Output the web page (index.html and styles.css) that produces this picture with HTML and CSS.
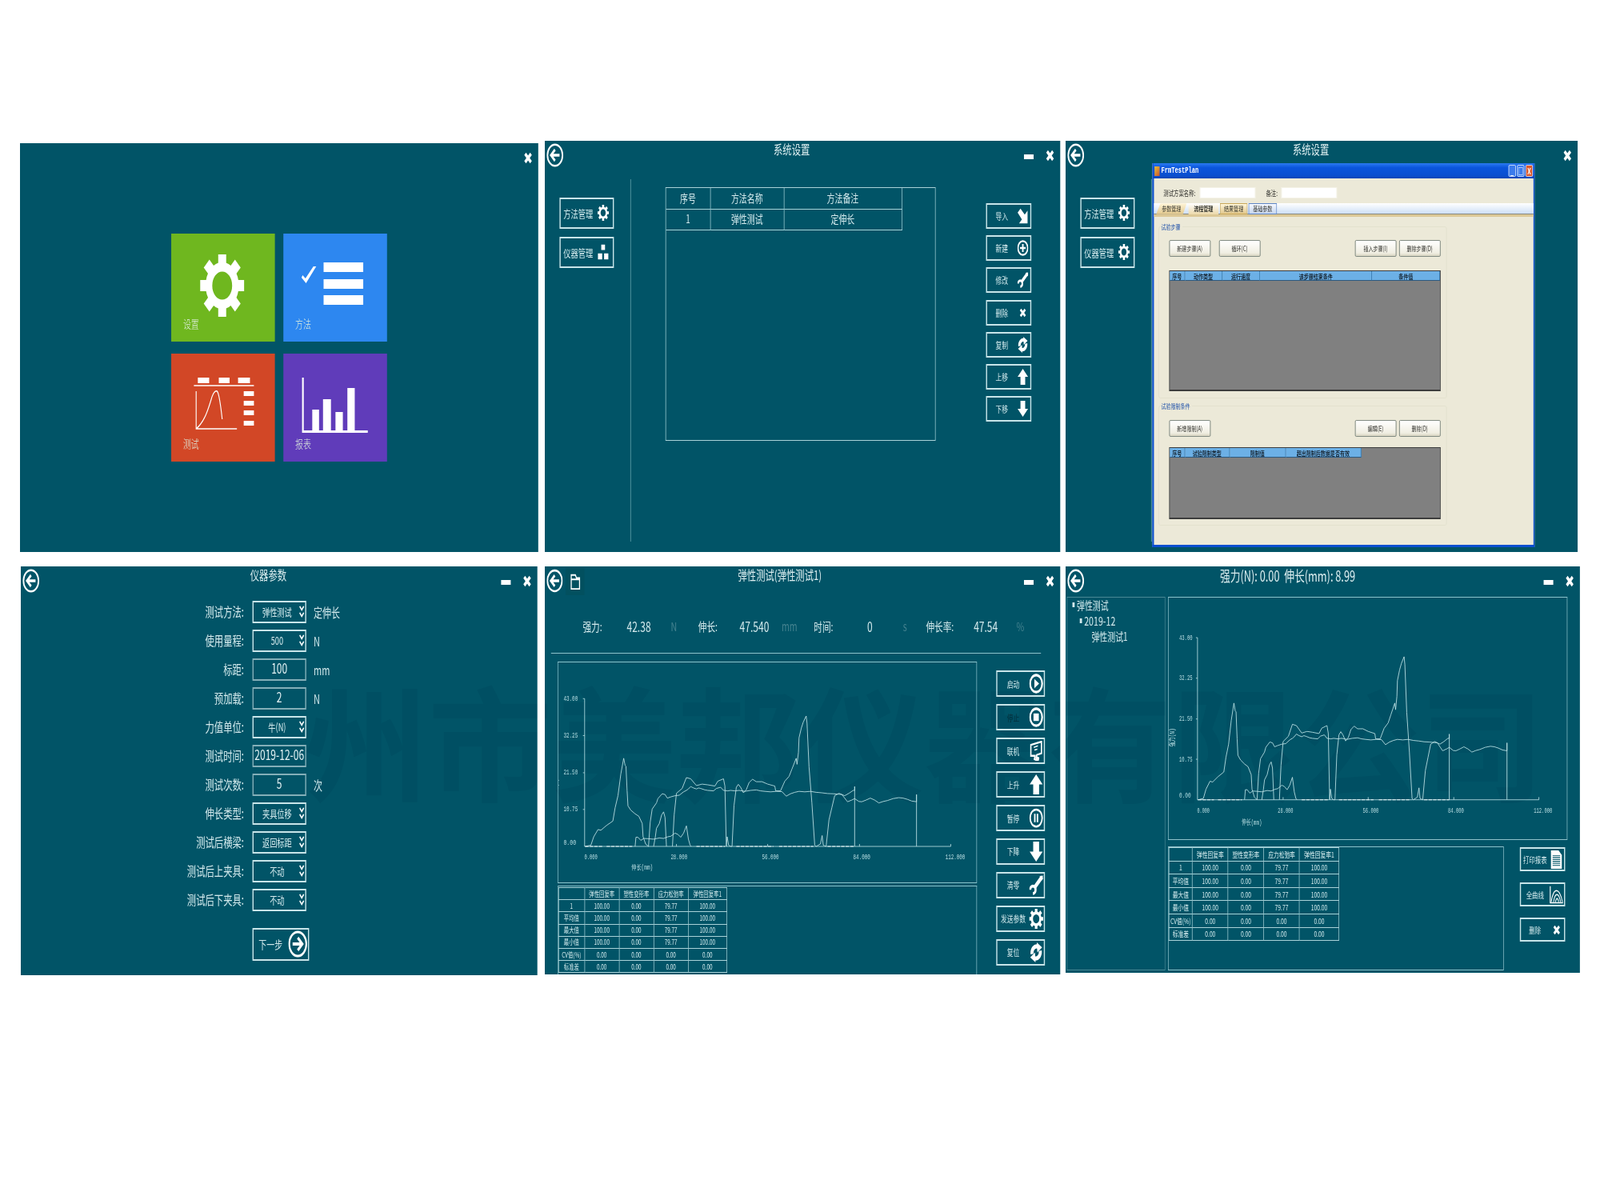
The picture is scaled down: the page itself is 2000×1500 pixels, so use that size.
FILE: index.html
```html
<!DOCTYPE html>
<html lang="zh">
<head>
<meta charset="utf-8">
<title>试验机软件界面</title>
<link rel="stylesheet" href="styles.css">
</head>
<body>
<svg class="defs" aria-hidden="true">
  <defs>
    <symbol id="i-back" viewBox="0 0 30 30"><circle cx="15" cy="15" r="13.3" fill="none" stroke="#fff" stroke-width="2.6"/><path d="M23 15H9M15 8l-7 7 7 7" fill="none" stroke="#fff" stroke-width="3.4"/></symbol>
    <symbol id="i-next" viewBox="0 0 30 30"><circle cx="15" cy="15" r="13.3" fill="none" stroke="#fff" stroke-width="2.6"/><path d="M7 15h14M15 8l7 7-7 7" fill="none" stroke="#fff" stroke-width="3.4"/></symbol>
    <symbol id="i-x" viewBox="0 0 16 16"><path d="M2.500 2.500l11 11M13.500 2.500l-11 11" stroke="#fff" stroke-width="4.600" fill="none"/></symbol>
    <symbol id="i-gear" viewBox="-50 -50 100 100">
      <circle r="30" fill="none" stroke="#fff" stroke-width="15"/>
      <g fill="#fff"><rect x="-9" y="-50" width="18" height="20"/><rect x="-9" y="-50" width="18" height="20" transform="rotate(45)"/><rect x="-9" y="-50" width="18" height="20" transform="rotate(90)"/><rect x="-9" y="-50" width="18" height="20" transform="rotate(135)"/><rect x="-9" y="-50" width="18" height="20" transform="rotate(180)"/><rect x="-9" y="-50" width="18" height="20" transform="rotate(225)"/><rect x="-9" y="-50" width="18" height="20" transform="rotate(270)"/><rect x="-9" y="-50" width="18" height="20" transform="rotate(315)"/></g>
    </symbol>
    <symbol id="i-squares" viewBox="0 0 24 24"><path d="M8 1h8v8H8zM1 14h9v9H1zM14 14h9v9h-9z" fill="#fff"/></symbol>
    <symbol id="i-import" viewBox="0 0 24 24"><path d="M1 7l6-6 9 9 6-6v19H4l6-6z" fill="#fff"/></symbol>
    <symbol id="i-plus" viewBox="0 0 24 24"><circle cx="12" cy="12" r="10.300" fill="none" stroke="#fff" stroke-width="2.800"/><path d="M12 6v12M6 12h12" stroke="#fff" stroke-width="3.200" fill="none"/></symbol>
    <symbol id="i-wrench" viewBox="0 0 24 24"><path d="M22 2L9 15" fill="none" stroke="#fff" stroke-width="5"/><path d="M23.500 .5l-1 6-5-5z" fill="#fff"/><path d="M2 17.500A4.500 4.500 0 1 1 6.500 22" fill="none" stroke="#fff" stroke-width="3.600"/></symbol>
    <symbol id="i-sync" viewBox="0 0 24 24"><path d="M5 14a8 8 0 0 1 10-9" fill="none" stroke="#fff" stroke-width="5"/><path d="M13 0l9 6-8 6z" fill="#fff"/><path d="M19 10a8 8 0 0 1-10 9" fill="none" stroke="#fff" stroke-width="5"/><path d="M11 24l-9-6 8-6z" fill="#fff"/></symbol>
    <symbol id="i-up" viewBox="0 0 24 24"><path d="M12 0l11 12h-6v12H7V12H1z" fill="#fff"/></symbol>
    <symbol id="i-down" viewBox="0 0 24 24"><path d="M12 24L1 12h6V0h10v12h6z" fill="#fff"/></symbol>
    <symbol id="i-play" viewBox="0 0 24 24"><circle cx="12" cy="12" r="10.200" fill="none" stroke="#fff" stroke-width="3"/><path d="M9 6.500l8 5.500-8 5.500z" fill="#fff"/></symbol>
    <symbol id="i-stop" viewBox="0 0 24 24"><circle cx="12" cy="12" r="10.200" fill="none" stroke="#fff" stroke-width="3"/><rect x="7.500" y="7.500" width="9" height="9" fill="#fff"/></symbol>
    <symbol id="i-pause" viewBox="0 0 24 24"><circle cx="12" cy="12" r="10.200" fill="none" stroke="#fff" stroke-width="2.400"/><path d="M8.500 7h2.500v10H8.500zM13 7h2.500v10H13z" fill="#fff"/></symbol>
    <symbol id="i-board" viewBox="0 0 24 24"><path d="M3 5l18-4v14l-8 2-1 3 4 1-1 3-6-2 1-4-7 0z" fill="none" stroke="#fff" stroke-width="2.200"/><path d="M8 8l7-2M9 11l5-1" stroke="#fff" stroke-width="1.500" fill="none"/><path d="M12 18l5 2-1 4-5-2z" fill="#fff"/></symbol>
    <symbol id="i-doc" viewBox="0 0 24 24"><path d="M2 0h14l6 6v18H2z" fill="#fff"/><path d="M5 7h14M5 9.500h14M5 12h14M5 14.500h14M5 17h14M5 19.500h14" stroke="#015467" stroke-width="1.100" fill="none"/></symbol>
    <symbol id="i-curves" viewBox="0 0 30 26"><path d="M2 0v25h27" fill="none" stroke="#fff" stroke-width="2"/><path d="M4 24C9 1 21 1 28 24M9 24C12 9 20 9 24 24M13 24c2-7 5-7 7 0" fill="none" stroke="#fff" stroke-width="1.700"/></symbol>
    <symbol id="i-chev" viewBox="0 0 10 20"><path d="M1 2l4 5 4-5M1 11l4 5 4-5" fill="none" stroke="#fff" stroke-width="2.200"/></symbol>
    <symbol id="i-folder" viewBox="0 0 24 24"><path d="M4 22V3h8l2 4h6v15zM4 9h16" fill="none" stroke="#fff" stroke-width="2"/></symbol>
    <g id="curves">
      <polyline class="curve" points="50,630 70,625 80,590 95,560 105,563 125,543 147,525 155,470 165,420 175,330 185,265 190,295 193,298 197,400 200,462 210,480 225,495 238,505 250,535 253,590 262,620 272,630"/>
      <polyline class="curve" points="225,630 228,592 235,592 245,605 255,597 270,598 290,600 310,595 325,597 340,590 350,588 365,575 375,580 385,592 395,575 405,545 412,600 418,625 422,630"/>
      <polyline class="curve" points="290,630 296,590 300,555 310,535 318,500 325,487 330,510 335,630"/>
      <polyline class="curve" points="272,630 278,530 285,475 300,450 305,432 320,412 330,415 338,430 350,425 365,420 380,418 395,404 405,398 412,392 420,382 430,388 440,392 448,388 455,390 470,396 480,398 500,400 510,390 525,385 535,398 550,400 560,398 575,400 590,398 610,402 630,398 650,396 665,400 680,402 700,404 720,402 740,403 755,422 770,412 785,406 800,402 820,404 840,402 860,406 880,408 900,411 920,412 950,415 970,445 985,438 995,432 1010,444 1020,445 1035,438 1050,430 1065,438 1080,450 1095,444 1110,440 1130,432 1150,428 1165,430 1180,435 1195,442 1212,445 1212,415 1212,630"/>
      <polyline class="curve" points="356,630 362,500 370,410 390,390 405,345 420,350 440,378 460,372 480,375 505,380 515,360 535,350 540,380 545,630 548,590 553,625 560,630 565,630 572,460 580,385 587,373 595,385 605,408 615,395 625,365 637,352 650,362 670,362 690,372 715,380 718,400 735,400 750,360 765,340 775,310 790,265 793,290 798,240 800,180 808,140 815,115 825,90 828,120 835,300 845,450 855,625 860,630 875,620 881,585 885,625 895,630 905,520 915,470 925,420 940,410 960,420 975,410 990,398 995,398 995,382 995,630"/>
      <path class="axis" d="M48 18V630H1332M42 18h6M42 171h6M42 325h6M42 477h6M370 620v10M690 620v10M1012 620v10M1332 620v10"/>
      <path class="base" d="M50 630h60M125 630h90M440 630h100M580 630h130M730 630h120M900 630h95"/>
    </g>
  </defs>
</svg>

<main class="collage">
  <!-- 主菜单 -->
  <div class="slot slot-a">
    <section class="win w1">
      <header class="head"><span></span><span></span><div class="ctrls ctrls-home"><svg class="ic-x"><use href="#i-x"/></svg></div></header>
      <div class="tiles">
        <div class="tile t-green">
          <svg class="tile-art" viewBox="0 0 183 104"><use href="#i-gear" x="51" y="26" width="78" height="78"/></svg>
          <span class="tile-label">设置</span>
        </div>
        <div class="tile t-blue">
          <svg class="tile-art" viewBox="0 0 183 104"><path d="M34 52l5 4L53 41l5 0-18 21-8-7z" fill="#fff"/><path d="M71 36h70v12H71zM71 57h70v12H71zM71 77h70v12H71z" fill="#fff"/></svg>
          <span class="tile-label">方法</span>
        </div>
        <div class="tile t-red">
          <svg class="tile-art" viewBox="0 0 183 104"><path d="M47 30h20v7H47zM84 30h19v7H84zM118 30h21v7h-21zM128 47h18v6h-18zM128 59h18v6h-18zM128 71h18v6h-18zM128 84h18v6h-18z" fill="#fff"/><path d="M40 40h106M44 47v47h72M44 94c16-10 22-26 28-40 3-6 6-8 9-7 4 3 7 22 9 35" fill="none" stroke="#fff" stroke-width="1.600"/></svg>
          <span class="tile-label">测试</span>
        </div>
        <div class="tile t-purple">
          <svg class="tile-art" viewBox="0 0 183 104"><path d="M33 30h3v66h113v3H33zM51 70h12v26H51zM70 57h14v39H70zM92 73h13v23H92zM113 43h13v53h-13z" fill="#fff"/></svg>
          <span class="tile-label">报表</span>
        </div>
      </div>
    </section>
  </div>

  <!-- 系统设置 -->
  <div class="slot slot-b">
    <section class="win w2">
      <header class="head">
        <svg class="ic-back"><use href="#i-back"/></svg>
        <h1 class="title title-c">系统设置</h1>
        <div class="ctrls"><i class="ic-min"></i><svg class="ic-x"><use href="#i-x"/></svg></div>
      </header>
      <div class="sys">
        <nav class="side">
          <div class="btn btn-side"><span>方法管理</span><svg class="ic-s"><use href="#i-gear"/></svg></div>
          <div class="btn btn-side"><span>仪器管理</span><svg class="ic-s"><use href="#i-squares"/></svg></div>
        </nav>
        <div class="rule"></div>
        <div class="listbox">
          <table class="grid-t">
            <colgroup><col class="c78"><col class="c130"><col class="c208"></colgroup>
            <tr><th>序号</th><th>方法名称</th><th>方法备注</th></tr>
            <tr><td>1</td><td>弹性测试</td><td>定伸长</td></tr>
          </table>
        </div>
        <div class="tools">
          <div class="btn btn-tool"><span>导入</span><svg class="ic-t"><use href="#i-import"/></svg></div>
          <div class="btn btn-tool"><span>新建</span><svg class="ic-t"><use href="#i-plus"/></svg></div>
          <div class="btn btn-tool"><span>修改</span><svg class="ic-t"><use href="#i-wrench"/></svg></div>
          <div class="btn btn-tool"><span>删除</span><svg class="ic-tx"><use href="#i-x"/></svg></div>
          <div class="btn btn-tool"><span>复制</span><svg class="ic-t"><use href="#i-sync"/></svg></div>
          <div class="btn btn-tool"><span>上移</span><svg class="ic-t"><use href="#i-up"/></svg></div>
          <div class="btn btn-tool"><span>下移</span><svg class="ic-t"><use href="#i-down"/></svg></div>
        </div>
      </div>
    </section>
  </div>

  <!-- 系统设置 + 对话框 -->
  <div class="slot slot-c">
    <section class="win w3">
      <header class="head">
        <svg class="ic-back"><use href="#i-back"/></svg>
        <h1 class="title title-c">系统设置</h1>
        <div class="ctrls"><svg class="ic-x"><use href="#i-x"/></svg></div>
      </header>
      <div class="sys">
        <nav class="side">
          <div class="btn btn-side"><span>方法管理</span><svg class="ic-s"><use href="#i-gear"/></svg></div>
          <div class="btn btn-side"><span>仪器管理</span><svg class="ic-s"><use href="#i-gear"/></svg></div>
        </nav>
        <div class="rule"></div>
      </div>
      <div class="xp">
        <div class="xp-bar">
          <i class="xp-ico"></i><span class="xp-name">FrmTestPlan</span>
          <span class="xp-cap">_</span><span class="xp-cap">□</span><span class="xp-cap xp-close">X</span>
        </div>
        <div class="xp-row">
          <span class="xp-l1">测试方案名称:</span><i class="xp-in"></i>
          <span class="xp-l2">备注:</span><i class="xp-in"></i>
        </div>
        <div class="xp-tabs">
          <span class="xp-tab xp-tab1">参数管理</span>
          <span class="xp-tab xp-tab2">流程管理</span>
          <span class="xp-tab xp-tab3">结果管理</span>
          <span class="xp-tab xp-tab4">基础参数</span>
        </div>
        <fieldset class="xp-group xp-g1">
          <legend>试验步骤</legend>
          <div class="xp-btns">
            <span class="xp-btn">新建步骤(A)</span><span class="xp-btn">循环(C)</span>
            <span class="xp-btn xp-push">插入步骤(I)</span><span class="xp-btn">删除步骤(D)</span>
          </div>
          <div class="xp-grid xp-grid1">
            <div class="xp-hd xp-hd1"><b>序号</b><b>动作类型</b><b>运行速度</b><b>该步骤结束条件</b><b>条件值</b></div>
          </div>
        </fieldset>
        <fieldset class="xp-group xp-g2">
          <legend>试验限制条件</legend>
          <div class="xp-btns">
            <span class="xp-btn">新增限制(A)</span>
            <span class="xp-btn xp-push">编辑(E)</span><span class="xp-btn">删除(D)</span>
          </div>
          <div class="xp-grid xp-grid2">
            <div class="xp-hd xp-hd2"><b>序号</b><b>试验限制类型</b><b>限制值</b><b>超出限制后数据是否有效</b></div>
          </div>
        </fieldset>
      </div>
    </section>
  </div>

  <!-- 仪器参数 -->
  <div class="slot slot-d">
    <section class="win w4">
      <header class="head">
        <svg class="ic-back"><use href="#i-back"/></svg>
        <h1 class="title title-d">仪器参数</h1>
        <div class="ctrls"><i class="ic-min"></i><svg class="ic-x"><use href="#i-x"/></svg></div>
      </header>
      <div class="form">
        <label>测试方法:</label><div class="field sel"><span>弹性测试</span><svg class="ic-chev"><use href="#i-chev"/></svg></div><span class="unit">定伸长</span>
        <label>使用量程:</label><div class="field sel"><span>500</span><svg class="ic-chev"><use href="#i-chev"/></svg></div><span class="unit">N</span>
        <label>标距:</label><div class="field inp">100</div><span class="unit">mm</span>
        <label>预加载:</label><div class="field inp">2</div><span class="unit">N</span>
        <label>力值单位:</label><div class="field sel"><span>牛(N)</span><svg class="ic-chev"><use href="#i-chev"/></svg></div><span class="unit"></span>
        <label>测试时间:</label><div class="field inp">2019-12-06</div><span class="unit"></span>
        <label>测试次数:</label><div class="field inp">5</div><span class="unit">次</span>
        <label>伸长类型:</label><div class="field sel"><span>夹具位移</span><svg class="ic-chev"><use href="#i-chev"/></svg></div><span class="unit"></span>
        <label>测试后横梁:</label><div class="field sel"><span>返回标距</span><svg class="ic-chev"><use href="#i-chev"/></svg></div><span class="unit"></span>
        <label>测试后上夹具:</label><div class="field sel"><span>不动</span><svg class="ic-chev"><use href="#i-chev"/></svg></div><span class="unit"></span>
        <label>测试后下夹具:</label><div class="field sel"><span>不动</span><svg class="ic-chev"><use href="#i-chev"/></svg></div><span class="unit"></span>
        <div class="btn btn-next"><span>下一步</span><svg class="ic-next"><use href="#i-next"/></svg></div>
      </div>
    </section>
  </div>

  <!-- 弹性测试 -->
  <div class="slot slot-e">
    <section class="win w5">
      <header class="head head-e">
        <div class="head-tools"><svg class="ic-back"><use href="#i-back"/></svg><div class="folder"><svg class="ic-folder"><use href="#i-folder"/></svg></div></div>
        <h1 class="title title-e">弹性测试(弹性测试1)</h1>
        <div class="ctrls"><i class="ic-min"></i><svg class="ic-x"><use href="#i-x"/></svg></div>
      </header>
      <div class="stats">
        <div class="stat"><span>强力:</span><b>42.38</b><em>N</em></div>
        <div class="stat"><span>伸长:</span><b>47.540</b><em>mm</em></div>
        <div class="stat"><span>时间:</span><b>0</b><em>s</em></div>
        <div class="stat stat-last"><span>伸长率:</span><b>47.54</b><em>%</em></div>
      </div>
      <hr class="hr">
      <div class="test">
        <div class="test-left">
          <div class="chart chart-e">
            <svg class="plot" viewBox="-44 -132 1466 911" preserveAspectRatio="none">
              <use href="#curves"/>
              <text class="tk" x="-26" y="26" textLength="50" lengthAdjust="spacingAndGlyphs">43.00</text>
              <text class="tk" x="-26" y="179" textLength="50" lengthAdjust="spacingAndGlyphs">32.25</text>
              <text class="tk" x="-26" y="333" textLength="50" lengthAdjust="spacingAndGlyphs">21.50</text>
              <text class="tk" x="-26" y="485" textLength="50" lengthAdjust="spacingAndGlyphs">10.75</text>
              <text class="tk" x="-26" y="622" textLength="44" lengthAdjust="spacingAndGlyphs">0.00</text>
              <text class="tk" x="47" y="684" textLength="46" lengthAdjust="spacingAndGlyphs">0.000</text>
              <text class="tk" x="350" y="684" textLength="58" lengthAdjust="spacingAndGlyphs">28.000</text>
              <text class="tk" x="670" y="684" textLength="59" lengthAdjust="spacingAndGlyphs">56.000</text>
              <text class="tk" x="990" y="684" textLength="60" lengthAdjust="spacingAndGlyphs">84.000</text>
              <text class="tk" x="1313" y="684" textLength="69" lengthAdjust="spacingAndGlyphs">112.000</text>
              <text class="tk" x="212" y="725" textLength="76" lengthAdjust="spacingAndGlyphs">伸长(mm)</text>
              <text class="tk" transform="translate(-46 420) rotate(-90)" textLength="70" lengthAdjust="spacingAndGlyphs">强力(N)</text>
            </svg>
          </div>
          <div class="tbox tbox-e">
            <table class="res res-e">
              <colgroup><col class="e0"><col class="e1"><col class="e1"><col class="e1"><col class="e2"></colgroup>
              <tr><th></th><th>弹性回复率</th><th>塑性变形率</th><th>应力松弛率</th><th>弹性回复率1</th></tr>
              <tr><th>1</th><td>100.00</td><td>0.00</td><td>79.77</td><td>100.00</td></tr>
              <tr><th>平均值</th><td>100.00</td><td>0.00</td><td>79.77</td><td>100.00</td></tr>
              <tr><th>最大值</th><td>100.00</td><td>0.00</td><td>79.77</td><td>100.00</td></tr>
              <tr><th>最小值</th><td>100.00</td><td>0.00</td><td>79.77</td><td>100.00</td></tr>
              <tr><th>CV值(%)</th><td>0.00</td><td>0.00</td><td>0.00</td><td>0.00</td></tr>
              <tr><th>标准差</th><td>0.00</td><td>0.00</td><td>0.00</td><td>0.00</td></tr>
            </table>
          </div>
        </div>
        <div class="test-tools">
          <div class="btn btn-run"><span>启动</span><svg class="ic-r"><use href="#i-play"/></svg></div>
          <div class="btn btn-run"><span class="off">停止</span><svg class="ic-r"><use href="#i-stop"/></svg></div>
          <div class="btn btn-run"><span>联机</span><svg class="ic-r"><use href="#i-board"/></svg></div>
          <div class="btn btn-run"><span>上升</span><svg class="ic-r"><use href="#i-up"/></svg></div>
          <div class="btn btn-run"><span>暂停</span><svg class="ic-r"><use href="#i-pause"/></svg></div>
          <div class="btn btn-run"><span>下降</span><svg class="ic-r"><use href="#i-down"/></svg></div>
          <div class="btn btn-run"><span>清零</span><svg class="ic-r"><use href="#i-wrench"/></svg></div>
          <div class="btn btn-run"><span>发送参数</span><svg class="ic-r"><use href="#i-gear"/></svg></div>
          <div class="btn btn-run"><span>复位</span><svg class="ic-r"><use href="#i-sync"/></svg></div>
        </div>
      </div>
    </section>
  </div>

  <!-- 报表 -->
  <div class="slot slot-f">
    <section class="win w6">
      <header class="head head-f">
        <svg class="ic-back"><use href="#i-back"/></svg>
        <h1 class="title title-f">强力(N):&nbsp;0.00&nbsp;&nbsp;伸长(mm):&nbsp;8.99</h1>
        <div class="ctrls"><i class="ic-min"></i><svg class="ic-x"><use href="#i-x"/></svg></div>
      </header>
      <div class="report">
        <aside class="tree">
          <div class="node"><i></i>弹性测试</div>
          <div class="node n2"><i></i>2019-12</div>
          <div class="node n3">弹性测试1</div>
        </aside>
        <div class="report-right">
          <div class="chart chart-f">
            <svg class="plot" viewBox="-60.400 -133.200 1498.700 913.500" preserveAspectRatio="none">
              <use href="#curves"/>
              <text class="tk" x="-21" y="26" textLength="50" lengthAdjust="spacingAndGlyphs">43.00</text>
              <text class="tk" x="-21" y="179" textLength="50" lengthAdjust="spacingAndGlyphs">32.25</text>
              <text class="tk" x="-21" y="333" textLength="50" lengthAdjust="spacingAndGlyphs">21.50</text>
              <text class="tk" x="-21" y="485" textLength="50" lengthAdjust="spacingAndGlyphs">10.75</text>
              <text class="tk" x="-21" y="622" textLength="44" lengthAdjust="spacingAndGlyphs">0.00</text>
              <text class="tk" x="47" y="680" textLength="46" lengthAdjust="spacingAndGlyphs">0.000</text>
              <text class="tk" x="350" y="680" textLength="58" lengthAdjust="spacingAndGlyphs">28.000</text>
              <text class="tk" x="670" y="680" textLength="59" lengthAdjust="spacingAndGlyphs">56.000</text>
              <text class="tk" x="990" y="680" textLength="60" lengthAdjust="spacingAndGlyphs">84.000</text>
              <text class="tk" x="1313" y="680" textLength="69" lengthAdjust="spacingAndGlyphs">112.000</text>
              <text class="tk" x="215" y="725" textLength="75" lengthAdjust="spacingAndGlyphs">伸长(mm)</text>
              <text class="tk" transform="translate(-40 430) rotate(-90)" textLength="70" lengthAdjust="spacingAndGlyphs">强力(N)</text>
            </svg>
          </div>
          <div class="report-bottom">
            <div class="tbox tbox-f">
              <table class="res res-f">
                <colgroup><col class="f0"><col class="f1"><col class="f1"><col class="f1"><col class="f2"></colgroup>
                <tr><th></th><th>弹性回复率</th><th>塑性变形率</th><th>应力松弛率</th><th>弹性回复率1</th></tr>
                <tr><th>1</th><td>100.00</td><td>0.00</td><td>79.77</td><td>100.00</td></tr>
                <tr><th>平均值</th><td>100.00</td><td>0.00</td><td>79.77</td><td>100.00</td></tr>
                <tr><th>最大值</th><td>100.00</td><td>0.00</td><td>79.77</td><td>100.00</td></tr>
                <tr><th>最小值</th><td>100.00</td><td>0.00</td><td>79.77</td><td>100.00</td></tr>
                <tr><th>CV值(%)</th><td>0.00</td><td>0.00</td><td>0.00</td><td>0.00</td></tr>
                <tr><th>标准差</th><td>0.00</td><td>0.00</td><td>0.00</td><td>0.00</td></tr>
              </table>
            </div>
            <div class="report-tools">
              <div class="btn btn-rep"><span>打印报表</span><svg class="ic-d"><use href="#i-doc"/></svg></div>
              <div class="btn btn-rep"><span>全曲线</span><svg class="ic-d"><use href="#i-curves"/></svg></div>
              <div class="btn btn-rep"><span>删除</span><svg class="ic-dx"><use href="#i-x"/></svg></div>
            </div>
          </div>
        </div>
      </div>
    </section>
  </div>
</main>
<div class="watermark">州市美邦仪器有限公司</div>
</body>
</html>
```

FILE: styles.css
```css
* { box-sizing: border-box; }
html, body { margin: 0; background: #fff; }
body {
  width: 2000px;
  height: 1500px;
  padding-top: 176px;
  overflow: hidden;
  position: relative;
  font-family: "Noto Sans CJK SC", "Noto Sans", sans-serif;
  font-weight: 400;
  color: #d3e9ec;
}
.defs { position: absolute; width: 0; height: 0; }

.collage {
  display: grid;
  grid-template-columns: 656px 651px 640px;
  grid-template-rows: 514px 510px;
  row-gap: 18px;
  padding-left: 25px;
}
.slot-a { padding-top: 3px; }
.slot-d { padding-left: 1px; }

.win {
  position: relative;
  background: #015467;
  transform: scaleX(.708);
  transform-origin: 0 0;
  display: flex;
  flex-direction: column;
  overflow: hidden;
}
.w1 { width: 915px; height: 511px; }
.w2 { width: 910px; height: 514px; }
.w3 { width: 904px; height: 514px; }
.w4 { width: 912px; height: 511px; }
.w5 { width: 910px; height: 510px; }
.w6 { width: 908px; height: 508px; }

/* window header */
.head {
  display: grid;
  grid-template-columns: 33px 1fr 64px;
  height: 40px;
  padding-top: 3px;
  align-items: start;
  flex: none;
}
.ic-back { display: block; width: 30px; height: 30px; margin-left: 3px; }
.title {
  margin: -3px 0 0;
  height: 20px;
  line-height: 20px;
  font-size: 16px;
  font-weight: 400;
  text-align: center;
  color: #dcedef;
  white-space: nowrap;
}
.title-c { padding-right: 7px; }
.title-d { padding-right: 7px; }
.title-e { padding-right: 86px; font-size: 16px; }
.title-f { padding-right: 93px; font-size: 18px; line-height: 22px; height: 22px; margin-top: -3px; }
.ctrls { display: flex; justify-content: flex-end; align-items: center; gap: 21px; padding-right: 10px; height: 16px; margin-top: 7px; margin-left: -20px; }
.ctrls-home { padding-right: 10px; }
.ic-x { display: block; width: 16px; height: 15px; flex: none; }
.ic-min { display: block; width: 17px; height: 6px; background: #fff; margin-top: 3px; flex: none; }

/* tiles */
.tiles {
  display: grid;
  grid-template-columns: 183px 183px;
  grid-auto-rows: 135px;
  gap: 15px;
  margin: 72.500px 0 0 267px;
}
.tile { overflow: hidden; }
.t-green { background: #6fb71f; }
.t-blue { background: #2d87f0; }
.t-red { background: #d24726; }
.t-purple { background: #603cba; }
.tile-art { display: block; width: 183px; height: 104px; }
.tile-label { display: block; margin: 0 0 0 21px; font-size: 14px; line-height: 16px; color: #dfeede; font-weight: 300; }

/* shared button */
.btn { display: grid; align-items: center; border: 2px solid #c9e5e9; justify-items: center; }
.btn-side { width: 96px; height: 38.500px; grid-template-columns: 62px 26px; font-size: 13px; }
.btn-tool { width: 80px; height: 32px; grid-template-columns: 52px 22px; font-size: 11px; }
.btn-run { width: 86px; height: 33px; grid-template-columns: 56px 26px; font-size: 11px; }
.btn-rep { width: 80px; height: 30px; grid-template-columns: 50px 26px; font-size: 10.500px; }
.ic-s { width: 20px; height: 20px; display: block; }
.ic-t { width: 20px; height: 20px; display: block; }
.ic-tx { width: 14px; height: 12px; display: block; }
.ic-r { width: 25px; height: 25px; display: block; }
.ic-d { width: 25px; height: 23px; display: block; }
.ic-dx { width: 14px; height: 13px; display: block; }
.off { color: #0a3440; }

/* settings */
.sys {
  display: grid;
  grid-template-columns: 151px 1px 61px 477px 89px 80px;
  grid-template-areas: "side rule . list . tools";
  height: 453px;
  margin-top: 8px;
  flex: none;
}
.side { grid-area: side; padding: 23px 0 0 26px; display: flex; flex-direction: column; gap: 10.500px; }
.rule { grid-area: rule; background: #6ba6b1; }
.listbox { grid-area: list; margin-top: 10px; height: 317px; border: 1px solid #a9d2d8; }
.tools { grid-area: tools; padding-top: 30px; display: flex; flex-direction: column; gap: 8.200px; }

.grid-t { border-collapse: collapse; table-layout: fixed; width: 416px; font-size: 14px; }
.grid-t th, .grid-t td { height: 26px; padding: 0 0 2px; border: 1px solid #a9d2d8; border-top: 0; border-left: 0; text-align: center; font-weight: 400; }
.c78 { width: 78px; } .c130 { width: 130px; } .c208 { width: 208px; }

/* XP dialog */
.xp {
  position: absolute;
  left: 152.800px;
  top: 28.400px;
  width: 675px;
  height: 480px;
  background: #ece9d8;
  border: solid #0a4fd0;
  border-width: 0 2px 3px 3px;
  color: #2e2e2a;
  font-size: 9px;
  font-weight: 400;
}
.xp-bar {
  height: 19px;
  margin: 0 -1px;
  display: flex;
  align-items: center;
  gap: 2px;
  padding: 0 2px 0 2px;
  background: linear-gradient(#2a7af0, #0a55dc 30%, #0a4fd0 80%, #0a45b5);
  color: #fff;
}
.xp-ico { width: 9px; height: 12px; background: linear-gradient(135deg, #e8c23b, #c9532b); }
.xp-name { flex: 1; font-family: "Liberation Mono", monospace; font-size: 10px; font-weight: 700; margin-left: 1px; }
.xp-cap { width: 13px; height: 15px; line-height: 13px; text-align: center; font-size: 10px; font-weight: 700; border: 1px solid #dbe6fb; border-radius: 2px; background: #3a7bec; color: #fff; }
.xp-close { background: #dc5a2c; }
.xp-row { display: flex; align-items: center; height: 14px; margin-top: 10.800px; padding-left: 17px; }
.xp-l1 { width: 64px; }
.xp-l2 { width: 28px; margin-left: 18px; padding-left: 1px; }
.xp-in { width: 98px; height: 14px; background: #fff; border: 1px solid #f4f2e6; }
.xp-tabs {
  height: 17px;
  margin-top: 6px;
  display: flex;
  padding-left: 4px;
  background: linear-gradient(#fff, #cfe0f6 75%, #8a8a80 76%, #8a8a80 84%, #dcc896 85%);
}
.xp-tab { display: block; height: 13.500px; line-height: 13.500px; text-align: center; color: #33342d; font-size: 8.500px; }
.xp-tab1 { width: 54px; background: linear-gradient(#fff5d8, #e3c98d); clip-path: polygon(14% 0, 100% 0, 88% 100%, 0 100%); }
.xp-tab2 { width: 53px; margin-left: 3px; font-weight: 700; background: linear-gradient(#fff, #ecd9aa); }
.xp-tab3 { width: 48px; margin-left: 3px; background: linear-gradient(#fff5d8, #e3c98d); border: 1px solid #c9a85a; line-height: 11.500px; }
.xp-tab4 { width: 50px; margin-left: 2px; background: linear-gradient(#f5f8ff, #c6d6ef); border: 1px solid #5f87c8; line-height: 11.500px; }
.xp-group {
  width: 508px;
  margin: 0 0 0 8px;
  padding: 0 10px 0 18px;
  border: 1px solid #e2dfcc;
  border-radius: 3px;
  position: relative;
}
.xp-group legend { padding: 0 3px 0 0; margin-left: -14px; color: #1c4fa8; font-size: 8.500px; line-height: 10px; }
.xp-g1 { height: 220px; margin-top: 7px; }
.xp-g2 { height: 155px; margin-top: 4px; }
.xp-btns { display: flex; gap: 15px; }
.xp-g1 .xp-btns { padding-top: 12px; }
.xp-g2 .xp-btns { padding-top: 13px; }
.xp-btn {
  width: 73px;
  height: 20.600px;
  line-height: 18px;
  text-align: center;
  border: 1px solid #6f7a73;
  border-radius: 2px;
  background: linear-gradient(#fff, #f0eee2 80%, #d8d4c0);
  font-size: 8.500px;
}
.xp-btn + .xp-push { margin-left: auto; }
.xp-btn.xp-push + .xp-btn { margin-left: -10px; }
.xp-grid { width: 479px; background: #808080; border: 1px solid #3d3d3d; border-width: 1px 1px 2px 1px; }
.xp-grid1 { height: 151.500px; margin-top: 17px; }
.xp-grid2 { height: 90px; margin-top: 13px; }
.xp-hd { display: grid; height: 12.500px; font-size: 8.500px; line-height: 12px; text-align: center; color: #1a2b3a; }
.xp-hd b { background: #6cb0e6; border-right: 1px solid #2d6ea3; border-bottom: 1px solid #2d5a80; font-weight: 700; overflow: hidden; white-space: nowrap; }
.xp-hd1 { grid-template-columns: 26.800px 66px 66.600px 198px 120px; }
.xp-hd2 { grid-template-columns: 26.800px 79px 99px 133px; }

/* parameters form */
.form {
  display: grid;
  grid-template-columns: 394px 95px auto;
  grid-auto-rows: 28.500px;
  column-gap: 15px;
  row-gap: 7.500px;
  margin-top: 2.600px;
  font-size: 16px;
  align-items: center;
}
.form label { text-align: right; white-space: nowrap; padding-bottom: 2px; }
.field { height: 28.500px; display: flex; align-items: center; justify-content: center; border: 2px solid #c9e5e9; }
.sel { font-size: 13px; padding-left: 3px; }
.sel span { flex: 1; text-align: center; }
.inp { border-color: #84afb8; font-size: 17px; padding-bottom: 4px; white-space: nowrap; color: #e3f1f3; }
.ic-chev { width: 10px; height: 18px; display: block; margin-right: 1px; }
.unit { margin-left: -2px; font-size: 15.500px; }
.btn-next {
  grid-column: 2 / 3;
  width: 100px;
  height: 41.600px;
  margin-top: 13px;
  align-self: start;
  grid-template-columns: 60px 36px;
  font-size: 14px;
}
.ic-next { width: 34px; height: 34px; display: block; }

/* test */
.head-e { grid-template-columns: 70px 1fr 64px; }
.head-tools { display: flex; align-items: flex-start; }
.folder { width: 34px; height: 34px; margin: -1px 0 0 5px; background: #02505f; display: flex; align-items: center; justify-content: center; }
.ic-folder { width: 22px; height: 22px; display: block; }
.stats { display: flex; gap: 20px; padding-left: 67px; margin-top: 24px; height: 22px; flex: none; }
.stat { display: grid; grid-template-columns: 60px 78px 46px; align-items: center; line-height: 22px; font-size: 15px; }
.stat-last { grid-template-columns: 68px 75px 47px; margin-left: -6px; }
.stat b { font-weight: 400; font-size: 17px; text-align: center; }
.stat em { font-style: normal; color: #44828f; text-align: center; font-size: 15px; }
.hr { width: 864.700px; height: 1px; margin: 21.500px 0 0 11.300px; border: 0; background: #8fc2cb; flex: none; }
.test {
  display: grid;
  grid-template-columns: 740px 86px;
  column-gap: 34.400px;
  padding-left: 22.600px;
  margin-top: 10.200px;
  flex: none;
}
.test-left { display: flex; flex-direction: column; gap: 3.300px; }
.test-tools { padding-top: 11.800px; display: flex; flex-direction: column; gap: 8.900px; }
.chart { border: 1px solid #8fc2cb; }
.chart-e { height: 277px; }
.plot { display: block; width: 100%; height: 100%; }
.curve { fill: none; stroke: #c3e4e8; stroke-width: 1; vector-effect: non-scaling-stroke; stroke-linejoin: round; }
.axis { fill: none; stroke: #b9dde2; stroke-width: 1; vector-effect: non-scaling-stroke; }
.base { fill: none; stroke: #eaf6f8; stroke-width: 1.200; stroke-dasharray: 6 2; vector-effect: non-scaling-stroke; }
.tk { font-family: "Liberation Mono", "Noto Sans CJK SC", monospace; font-size: 27px; fill: #b9dde2; }
.tbox { border: 1px solid #8fc2cb; }
.tbox-e { height: 115px; border-bottom: 0; }
.tbox-f { width: 593.500px; height: 154.500px; }
.res { border-collapse: collapse; table-layout: fixed; }
.res th, .res td { padding: 0; border: 1px solid #a9d2d8; text-align: center; font-weight: 400; white-space: nowrap; overflow: hidden; }
.res-e { width: 297px; font-size: 9px; margin-top: 1px; }
.res-e th, .res-e td { height: 15.200px; }
.e0 { width: 46px; } .e1 { width: 61px; } .e2 { width: 68px; }
.res-f { width: 300px; font-size: 9.500px; }
.res-f th, .res-f td { height: 16.600px; }
.f0 { width: 41.600px; } .f1 { width: 63px; } .f2 { width: 69.600px; }

/* report */
.head-f { height: 37.500px; }
.report {
  display: grid;
  grid-template-columns: 174px 705.500px;
  column-gap: 5px;
  margin-left: 1.800px;
  height: 467.500px;
  flex: none;
}
.tree { border: 1px solid #4a8794; font-size: 14px; }
.node { height: 19.600px; line-height: 19.600px; display: flex; align-items: center; padding-left: 9px; }
.node i { width: 4px; height: 6px; background: #d3e9ec; margin-right: 4px; }
.n2 { padding-left: 22px; font-size: 15px; }
.n3 { padding-left: 43px; }
.report-right { display: flex; flex-direction: column; gap: 8px; }
.chart-f { height: 304.500px; }
.report-bottom { display: flex; }
.report-tools { margin-left: 27.500px; padding-top: 1px; display: flex; flex-direction: column; gap: 14px; }

/* watermark */
.watermark {
  position: absolute;
  left: 380px;
  top: 828px;
  font-size: 155px;
  font-weight: 700;
  line-height: 190px;
  white-space: nowrap;
  color: #f8f8f8;
  mix-blend-mode: color-burn;
  pointer-events: none;
}
```
